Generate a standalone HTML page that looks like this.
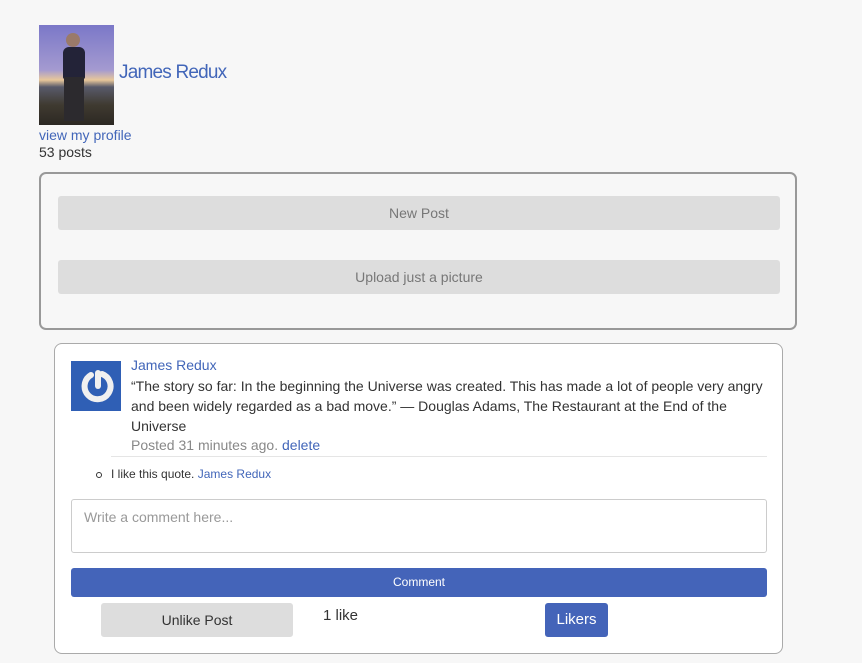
<!DOCTYPE html>
<html><head><style>
body{margin:0;background:#f7f7f7;font-family:"Liberation Sans",sans-serif;width:862px;height:663px;overflow:hidden;position:relative}
.a{position:absolute}
a{color:#4266b9;text-decoration:none}
.btn{position:absolute;background:#ddd;border-radius:3px;color:#777;font-size:14px;text-align:center}
</style></head><body>
<div class="a" style="left:39px;top:25px;width:75px;height:100px;background:linear-gradient(180deg,#7b78c8 0%,#a49ad0 45%,#e8c79a 55%,#585a6a 62%,#3f3a30 80%,#2c2823 100%)">
  <div class="a" style="left:27px;top:8px;width:14px;height:14px;border-radius:50%;background:#9a7a6a"></div>
  <div class="a" style="left:24px;top:22px;width:22px;height:32px;background:#232338;border-radius:6px 6px 2px 2px"></div>
  <div class="a" style="left:25px;top:52px;width:20px;height:44px;background:#2c2a2e"></div>
</div>
<a class="a" href="#" style="left:119px;top:62px;font-size:19px;letter-spacing:-0.8px">James Redux</a>
<a class="a" href="#" style="left:39px;top:127px;font-size:14px">view my profile</a>
<div class="a" style="left:39px;top:144px;font-size:14px;color:#333">53 posts</div>

<div class="a" style="left:39px;top:172px;width:754px;height:154px;border:2px solid #999;border-radius:7px"></div>
<div class="btn" style="left:58px;top:196px;width:722px;height:34px;line-height:34px">New Post</div>
<div class="btn" style="left:58px;top:260px;width:722px;height:34px;line-height:34px">Upload just a picture</div>

<div class="a" style="left:54px;top:343px;width:727px;height:309px;background:#fff;border:1px solid #aaa;border-radius:8px"></div>
<div class="a" style="left:71px;top:361px;width:50px;height:50px;background:#2f5fb5">
<svg width="50" height="50" viewBox="0 0 50 50"><path d="M20 14 A13 13 0 1 0 31 13" fill="none" stroke="#f0f0f0" stroke-width="6" stroke-linecap="round"/><path d="M27 12 V25" stroke="#f0f0f0" stroke-width="6" stroke-linecap="round"/></svg></div>
<a class="a" href="#" style="left:131px;top:357px;font-size:14px">James Redux</a>
<div class="a" style="left:131px;top:376px;width:640px;font-size:14px;line-height:20px;color:#333">“The story so far: In the beginning the Universe was created. This has made a lot of people very angry and been widely regarded as a bad move.” — Douglas Adams, The Restaurant at the End of the Universe</div>
<div class="a" style="left:131px;top:437px;font-size:14px;color:#888">Posted 31 minutes ago. <a href="#">delete</a></div>
<div class="a" style="left:111px;top:456px;width:656px;border-top:1px solid #e5e5e5"></div>
<div class="a" style="left:96px;top:472px;width:4px;height:4px;border:1px solid #333;border-radius:50%"></div>
<div class="a" style="left:111px;top:467px;font-size:12px;color:#333">I like this quote. <a href="#">James Redux</a></div>
<div class="a" style="left:71px;top:499px;width:694px;height:52px;border:1px solid #ccc;border-radius:3px;background:#fff"><span style="position:absolute;left:12px;top:9px;font-size:14px;color:#999">Write a comment here...</span></div>
<div class="a" style="left:71px;top:568px;width:696px;height:29px;background:#4464b9;border-radius:3px;color:#fff;font-size:12px;text-align:center;line-height:29px">Comment</div>
<div class="btn" style="left:101px;top:603px;width:192px;height:34px;line-height:34px;color:#333">Unlike Post</div>
<div class="a" style="left:323px;top:607px;font-size:15px;color:#333">1 like</div>
<div class="a" style="left:545px;top:603px;width:63px;height:34px;line-height:34px;background:#4464b9;border-radius:3px;color:#fff;text-align:center;font-size:15px">Likers</div>
</body></html>
